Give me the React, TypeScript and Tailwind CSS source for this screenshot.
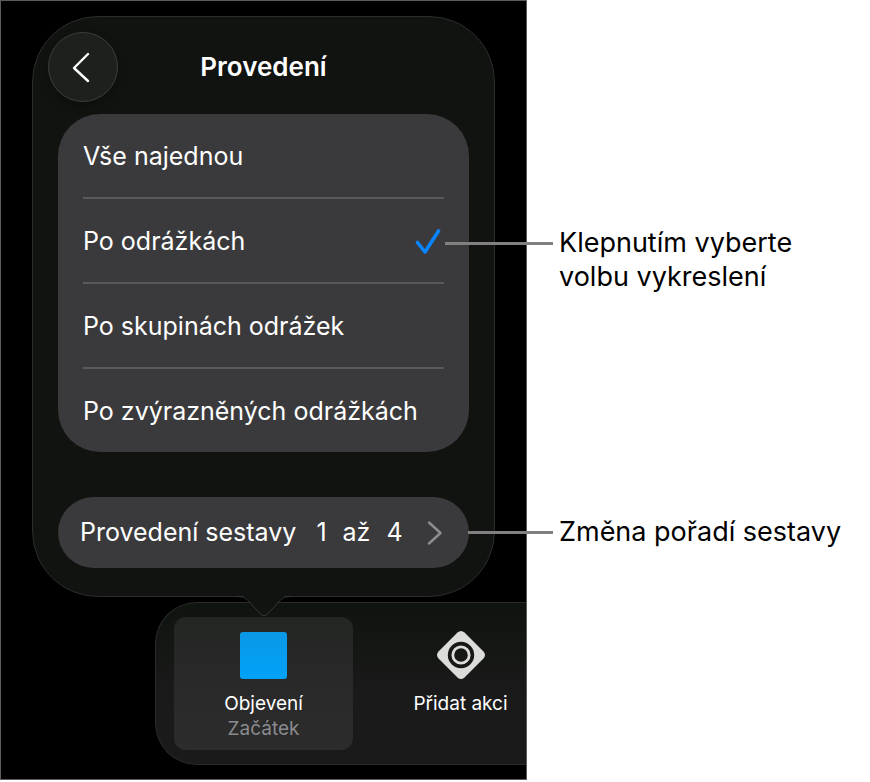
import { useState } from "react";

const OPTIONS = [
  "Vše najednou",
  "Po odrážkách",
  "Po skupinách odrážek",
  "Po zvýrazněných odrážkách",
];

function DeliveryOptions() {
  const [selected, setSelected] = useState(OPTIONS[1]);

  return (
    <div
      role="radiogroup"
      aria-labelledby="delivery-title"
      className="mt-3 rounded-[42px] bg-[#3a3a3c] px-[25px]"
    >
      {OPTIONS.map((option) => (
        <label
          key={option}
          className="relative flex cursor-pointer items-center justify-between border-b-2 border-[#59595c] last:border-b-0"
        >
          <input
            type="radio"
            name="delivery"
            value={option}
            checked={selected === option}
            onChange={() => setSelected(option)}
            className="peer sr-only"
          />
          <span className="pt-[26px] pb-6 text-[25px] leading-[33px] whitespace-nowrap text-white">
            {option}
          </span>
          <svg
            viewBox="0 0 26 26"
            className="mr-[3px] hidden size-[26px] shrink-0 peer-checked:block"
            fill="none"
            stroke="#0a84ff"
            strokeWidth="3.6"
            strokeLinecap="round"
            strokeLinejoin="round"
            aria-hidden="true"
          >
            <path d="M2.5 14.5 L10 24 L23.5 3" />
          </svg>
        </label>
      ))}
    </div>
  );
}

function Popover() {
  return (
    <section className="relative z-10 mr-[31px] ml-[31px] rounded-[66px] border border-[#2b2e2c] bg-[#111311] px-[25px] pt-[15px] pb-7">
      <header className="-ml-[10px] grid grid-cols-[70px_1fr_60px] items-center">
        <button
          type="button"
          aria-label="Zpět"
          className="flex size-[70px] items-center justify-center rounded-full border border-[#3a403c] bg-[#1c211e] shadow-[0_4px_10px_rgba(0,0,0,0.3)]"
        >
          <svg
            viewBox="0 0 32 32"
            className="size-8"
            fill="none"
            stroke="#ffffff"
            strokeWidth="2.4"
            strokeLinecap="round"
            strokeLinejoin="round"
            aria-hidden="true"
          >
            <path d="M21 3 L7 17 L21 30" />
          </svg>
        </button>
        <h1 id="delivery-title" className="text-center text-[26px] leading-9 font-semibold text-white">
          Provedení
        </h1>
      </header>

      <DeliveryOptions />

      <button
        type="button"
        className="mt-[45px] flex h-[71px] w-full items-center rounded-full bg-[#3a3a3c] px-[22px] text-[25px] whitespace-nowrap text-white"
      >
        <span>Provedení sestavy</span>
        <span className="ml-5">1</span>
        <span className="ml-4">až</span>
        <span className="ml-4">4</span>
        <svg
          viewBox="0 0 16 24"
          className="mr-1 ml-auto h-6 w-4"
          fill="none"
          stroke="#8e8e92"
          strokeWidth="2.4"
          strokeLinecap="round"
          strokeLinejoin="round"
          aria-hidden="true"
        >
          <path d="M2 1.500 L13.500 12 L2 22.500" />
        </svg>
      </button>

      <svg
        viewBox="0 0 54 23"
        className="absolute top-full left-1/2 -mt-px h-[23px] w-[54px] -translate-x-1/2"
        aria-hidden="true"
      >
        <path
          d="M0 0 H3 Q7 0.500 10 4 L24 19.500 Q27 22 30 19.500 L44 4 Q47 0.500 51 0 H54 Z"
          fill="#111311"
        />
        <path
          d="M0 1.500 H1 Q7 1 10 4.500 L24 19.500 Q27 22 30 19.500 L44 4.500 Q47 1 53 1.500 H54"
          fill="none"
          stroke="#343735"
        />
      </svg>
    </section>
  );
}

function ActionBar() {
  return (
    <nav
      aria-label="Pořadí akcí"
      className="mt-[5px] ml-[154px] flex items-start rounded-l-[42px] border border-r-0 border-[#2a2c2a] bg-linear-to-b from-[#0f140f] to-[#1a1a1a] to-60% py-3.5 pl-[18px]"
    >
      <button
        type="button"
        className="flex w-[179px] shrink-0 flex-col items-center rounded-xl bg-linear-to-b from-[#242624] to-[#2c2c2c] pt-[15px] pb-[9px]"
      >
        <span className="size-[47px] rounded-[3px] bg-linear-to-b from-[#0a98e6] to-[#00a2f8]" />
        <span className="mt-3 text-[19px] leading-[25px] text-white">Objevení</span>
        <span className="text-[19px] leading-[25px] text-[#8a8a8f]">Začátek</span>
      </button>
      <button type="button" className="flex flex-1 flex-col items-center pt-3.5 pl-[42px]">
        <svg viewBox="0 0 48 48" className="size-12" aria-hidden="true">
          <path
            d="M20.500 1.500 Q24 -1.500 27.500 1.500 L46.500 20.500 Q49.500 24 46.500 27.500 L27.500 46.500 Q24 49.500 20.500 46.500 L1.500 27.500 Q-1.500 24 1.500 20.500 Z"
            fill="#dcdcda"
          />
          <circle cx="24" cy="24" r="13.200" fill="#161816" />
          <circle cx="24" cy="24" r="8.200" fill="none" stroke="#dcdcda" strokeWidth="2.800" />
        </svg>
        <span className="mt-3 text-[19px] leading-[25px] whitespace-nowrap text-white">
          Přidat akci
        </span>
      </button>
    </nav>
  );
}

export default function App() {
  return (
    <main className="grid grid-cols-[527fr_343fr] items-start bg-white font-['Inter',sans-serif]">
      <div className="overflow-hidden border border-[#5a5c5a] bg-black pt-[15px] pb-3.5">
        <Popover />
        <ActionBar />
      </div>

      <aside className="relative z-20 pt-[226px] pl-8 text-[27px] leading-[34px] text-black">
        <p className="relative">
          <span className="absolute top-4 right-full mr-[6px] h-[3px] w-[108px] bg-[#808080]" />
          Klepnutím vyberte
          <br />
          volbu vykreslení
        </p>
        <p className="relative mt-[221px] whitespace-nowrap">
          <span className="absolute top-4 right-full mr-[6px] h-[3px] w-[85px] bg-[#808080]" />
          Změna pořadí sestavy
        </p>
      </aside>
    </main>
  );
}
